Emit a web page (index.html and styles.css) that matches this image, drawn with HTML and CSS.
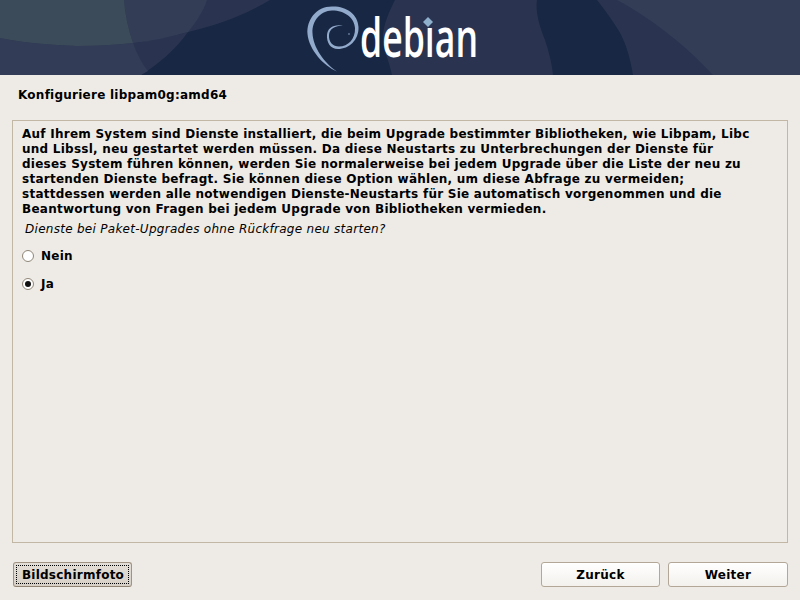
FILE: index.html
```html
<!DOCTYPE html>
<html lang="de">
<head>
  <meta charset="UTF-8" />
  <title>Debian Installer</title>
  <link rel="stylesheet" href="styles.css">
</head>
<body>
  <header class="banner">
    <svg class="banner-art" width="800" height="75" viewBox="0 0 800 75">
      <rect width="800" height="75" fill="#182744"/>
      <!-- left side shapes -->
      <path d="M0 0H270C245 15 218 25 188 32C150 42 115 47 77 46C50 45 25 43 0 38Z" fill="#2a3450"/>
      <path d="M0 38C25 43 50 45 77 46C115 47 150 42 188 32C175 50 160 63 141 75H0Z" fill="#2a3450"/>
      <path d="M0 38C25 43 50 45 77 46C95 46 115 45 133 43C137 54 142 64 148 71L141 75H0Z" fill="#323c56"/>
      <path d="M124 0H207C203 12 196 22 188 32C170 37 152 41 133 43C128 29 125 14 124 0Z" fill="#333d56"/>
      <path d="M0 0H124C125 14 128 29 133 43C115 45 95 46 77 46C50 45 25 43 0 38Z" fill="#3c4b5a"/>
      <!-- right side shapes -->
      <path d="M395 0H537C535 12 540 28 545 40C549 52 552 64 553 75H392C389 60 383 50 383 38C383 25 389 12 395 0Z" fill="#2a3450"/>
      <path d="M597 0H800V75H633C630 55 624 38 617 28C611 18 604 9 597 0Z" fill="#2a3450"/>
      <path d="M617 0H800V75H713C690 50 655 20 617 0Z" fill="#333d56"/>
      <!-- swirl -->
      <path d="M337 71.500C324 66 309 50 307.500 34C306.500 20 316 6.500 332 6.500C346 6 358 14 358.500 27C359 40 349 49 338 49C330 49 326.500 42 327 35C327.500 28 333 24 343 25.500C335 25.500 329.500 29 329 35C328.500 42 333 46.500 339 46.500C348 46.500 355.500 39 355 28C354.500 18 345 10.500 332 10.500C320 11 312 21 312.500 33C313 47 324 63 337 71.500Z" fill="#92aacb"/>
      <circle cx="349" cy="34" r="0.8" fill="#92aacb"/>
      <text class="wordmark" x="360" y="57" textLength="118" lengthAdjust="spacingAndGlyphs">debian</text>
      <!-- the diamond takes the place of the i's dot -->
      <rect x="419" y="12" width="16" height="15" fill="#2a3450"/>
      <path d="M428 17L433 22L428 27L423 22Z" fill="#8fb0cc"/>
    </svg>
  </header>

  <main class="content">
    <h1>Konfiguriere libpam0g:amd64</h1>
    <section class="panel">
      <p class="description">Auf Ihrem System sind Dienste installiert, die beim Upgrade bestimmter Bibliotheken, wie Libpam, Libc<br>und Libssl, neu gestartet werden müssen. Da diese Neustarts zu Unterbrechungen der Dienste für<br>dieses System führen können, werden Sie normalerweise bei jedem Upgrade über die Liste der neu zu<br>startenden Dienste befragt. Sie können diese Option wählen, um diese Abfrage zu vermeiden;<br>stattdessen werden alle notwendigen Dienste-Neustarts für Sie automatisch vorgenommen und die<br>Beantwortung von Fragen bei jedem Upgrade von Bibliotheken vermieden.</p>
      <p class="question">Dienste bei Paket-Upgrades ohne Rückfrage neu starten?</p>
      <label class="choice"><input type="radio" name="restart"> Nein</label>
      <label class="choice"><input type="radio" name="restart" checked> Ja</label>
    </section>
  </main>

  <footer class="actions">
    <button class="btn btn-focus"><span>Bildschirmfoto</span></button>
    <div class="nav-buttons">
      <button class="btn">Zurück</button>
      <button class="btn">Weiter</button>
    </div>
  </footer>
</body>
</html>
```

FILE: styles.css
```css
html, body {
  margin: 0;
  padding: 0;
  height: 100%;
}
body {
  width: 800px;
  height: 600px;
  overflow: hidden;
  display: flex;
  flex-direction: column;
  background: #eeebe7;
  color: #000;
  font-family: "DejaVu Sans", sans-serif;
  font-size: 12px;
  letter-spacing: 0.25px;
}
.banner {
  height: 75px;
  flex: none;
}
.banner-art {
  display: block;
}
.wordmark {
  font-family: "Open Sans", sans-serif;
  font-size: 54px;
  font-weight: 600;
  letter-spacing: 0;
  fill: #fff;
}
.content {
  flex: 1;
  display: flex;
  flex-direction: column;
  min-height: 0;
  padding: 0 12px;
}
h1 {
  margin: 0;
  padding: 13px 6px 0;
  height: 32px;
  font-size: 12px;
  line-height: 15px;
  font-weight: bold;
}
.panel {
  flex: 1;
  border: 1px solid #c2b6a5;
  padding: 6px 9px;
}
.description {
  margin: 0;
  font-weight: bold;
  line-height: 15px;
}
.question {
  margin: 5px 0 0 3px;
  font-style: italic;
  line-height: 15px;
  letter-spacing: 0.28px;
}
.choice {
  display: flex;
  align-items: center;
  gap: 7px;
  height: 28px;
  font-weight: bold;
}
.choice:first-of-type {
  margin-top: 5px;
}
.choice input {
  appearance: none;
  width: 12px;
  height: 12px;
  margin: 0;
  border: 1px solid #8f8677;
  border-radius: 50%;
  background: #fff;
  display: grid;
  place-items: center;
}
.choice input:checked::after {
  content: "";
  width: 6px;
  height: 6px;
  border-radius: 50%;
  background: #111;
}
.actions {
  flex: none;
  height: 57px;
  padding: 19px 12px 13px 13px;
  box-sizing: border-box;
  display: flex;
  justify-content: space-between;
}
.nav-buttons {
  display: flex;
  gap: 8px;
}
.btn {
  width: 119px;
  height: 25px;
  padding: 0;
  border: 1px solid #b3a797;
  border-radius: 3px;
  background: linear-gradient(#ffffff, #f4f1ed);
  color: #000;
  font-family: inherit;
  font-size: 12px;
  font-weight: bold;
  letter-spacing: 0.25px;
}
.nav-buttons .btn:last-child {
  width: 120px;
}
.btn-focus {
  padding: 2px;
  background: linear-gradient(#e3ded7, #d6d0c7);
  border-color: #a09383;
  border-bottom-color: #8f8272;
}
.btn-focus span {
  display: flex;
  align-items: center;
  justify-content: center;
  height: 100%;
  box-sizing: border-box;
  border: 1px dotted #000;
  padding-left: 1px;
}
```
